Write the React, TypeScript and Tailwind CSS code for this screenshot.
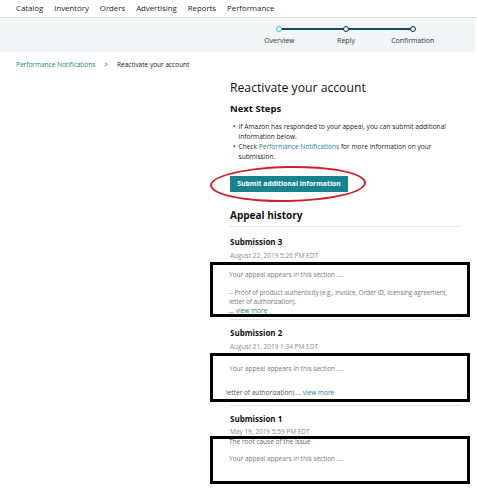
const NAV = ["Catalog", "Inventory", "Orders", "Advertising", "Reports", "Performance"]

const STEPS = [
  { label: "Overview", active: true },
  { label: "Reply", active: false },
  { label: "Confirmation", active: false },
]

function Stepper() {
  return (
    <div className="relative flex w-[200px]">
      {/* connecting line */}
      <div className="absolute left-[33px] right-[33px] top-[10px] h-[1.5px] bg-[#0f4c5c]" />
      {STEPS.map((s) => (
        <div key={s.label} className="relative flex w-[67px] flex-col items-center pt-[8px]">
          <span
            className={`h-[6px] w-[6px] rounded-full border-[1.5px] bg-[#f2f5f5] ${
              s.active ? "border-[#4fb3c2]" : "border-[#1d2b33]"
            }`}
          />
          <span className="mt-[4px] text-[7px] leading-[9px] text-[#333]">{s.label}</span>
        </div>
      ))}
    </div>
  )
}

function Submission({
  title,
  date,
  children,
  boxClass,
}: {
  title: string
  date: string
  children: React.ReactNode
  boxClass: string
}) {
  return (
    <div>
      <p className="h-[14px] text-[8px] font-bold leading-[14px] text-[#111]">{title}</p>
      <p className="h-[13px] text-[6.5px] leading-[13px] text-[#8a8a8a]">{date}</p>
      <div className={`-ml-[20px] w-[260px] border-[3px] border-black pl-[16px] pr-[1px] text-[6.5px] leading-[9.5px] text-[#7a7a7a] ${boxClass}`}>
        {children}
      </div>
    </div>
  )
}

function Bullet({ children }: { children: React.ReactNode }) {
  return (
    <li className="flex gap-[3px]">
      <span className="shrink-0">•</span>
      <span>{children}</span>
    </li>
  )
}

export default function App() {
  return (
    <div className="h-[499px] w-[477px] overflow-hidden bg-white font-['Open_Sans',sans-serif] text-[#111]">
      {/* top nav */}
      <div className="flex h-[18px] items-center gap-[11px] border-b border-[#dcdcdc] pl-[16px] text-[7.8px] text-[#222]">
        {NAV.map((n) => (
          <span key={n}>{n}</span>
        ))}
      </div>

      {/* stepper band */}
      <div className="flex h-[34px] w-[475px] justify-end bg-[#f2f5f5] pr-[29px]">
        <Stepper />
      </div>

      {/* breadcrumb */}
      <div className="flex h-[26px] items-center gap-[9px] pl-[16px] text-[6.5px]">
        <span className="text-[#24808f]">Performance Notifications</span>
        <span className="text-[#555]">&gt;</span>
        <span className="text-[#222]">Reactivate your account</span>
      </div>

      {/* main column */}
      <div className="ml-[230px] w-[232px]">
        <h1 className="h-[20px] text-[12.2px] leading-[20px] text-[#111]">Reactivate your account</h1>
        <h2 className="mt-[1px] h-[20px] text-[9.5px] font-bold leading-[20px] text-[#111]">Next Steps</h2>

        <ul className="mt-[3px] w-[222px] space-y-[1px] pl-[3px] text-[6.6px] leading-[9.5px] text-[#222]">
          <Bullet>If Amazon has responded to your appeal, you can submit additional information below.</Bullet>
          <Bullet>
            Check <span className="text-[#24808f]">Performance Notifications</span> for more information on your
            submission.
          </Bullet>
        </ul>

        {/* button with red circle */}
        <div className="relative mt-[15px] h-[16px] w-[118px]">
          <div className="flex h-full w-full items-center justify-center bg-[#16838f] text-[6.8px] font-bold text-white">
            Submit additional information
          </div>
          <div className="pointer-events-none absolute -left-[20px] -right-[18px] -top-[10px] -bottom-[10px] -rotate-[1deg] rounded-[50%] border-[2px] border-[#d0202a]" />
        </div>

        <h2 className="mt-[13px] h-[20px] text-[10px] font-bold leading-[20px] text-[#111]">Appeal history</h2>
        <div className="mt-[1px] h-px bg-[#e3e3e3]" />

        <div className="mt-[8px]">
          <Submission title="Submission 3" date="August 22, 2019 5:26 PM EDT" boxClass="h-[55px] pt-[5px]">
            <p>Your appeal appears in this section ....</p>
            <p className="mr-[12px] mt-[8px] tracking-[-0.12px]">
              -- Proof of product authenticity (e.g., invoice, Order ID, licensing agreement, letter of authorization).
            </p>
            <p className="-mt-[1px] text-[#555]">
              ... <span className="text-[#24808f]">view more</span>
            </p>
          </Submission>
        </div>

        <div className="mt-[2px] h-px bg-[#e3e3e3]" />

        <div className="mt-[6px]">
          <Submission title="Submission 2" date="August 21, 2019 1:34 PM EDT" boxClass="h-[49px] pt-[8px]">
            <p>Your appeal appears in this section ....</p>
            <p className="-ml-[3px] mt-[14px] text-[#555]">
              letter of authorization).... <span className="text-[#24808f]">view more</span>
            </p>
          </Submission>
        </div>

        <div className="mt-[3px] h-px bg-[#e3e3e3]" />

        <div className="mt-[6px]">
          <p className="h-[14px] text-[8px] font-bold leading-[14px] text-[#111]">Submission 1</p>
          <p className="h-[10px] text-[6.5px] leading-[12px] text-[#8a8a8a]">May 19, 2019 5:59 PM EDT</p>
          <div className="-ml-[20px] h-[48px] w-[260px] border-[3px] border-black pl-[16px] text-[6.5px] leading-[9.5px] text-[#7a7a7a]">
            <p className="-mt-[2px] text-[#666]">The root cause of the issue</p>
            <p className="mt-[7px]">Your appeal appears in this section ....</p>
          </div>
        </div>
      </div>
    </div>
  )
}
